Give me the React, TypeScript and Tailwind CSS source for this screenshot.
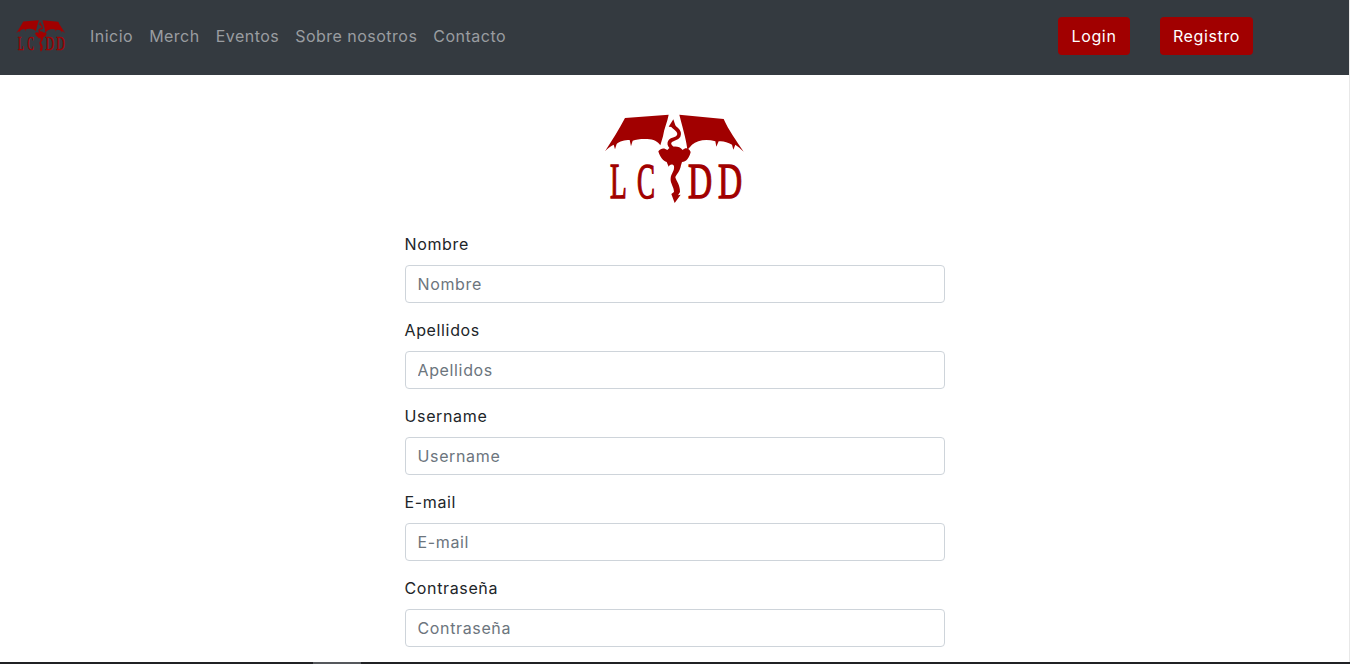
import React from 'react';

const font = 'font-["Inter","Liberation_Sans",sans-serif]';

const DragonLogo: React.FC<{ className?: string }> = ({ className }) => (
  <svg viewBox="45 28 420 270" className={`overflow-visible ${className ?? ''}`} aria-label="LCDD">
    <g fill="#a10000">
      {/* left wing */}
      <path d="M105 40 L236 30 C232 52 222 72 219 95 L211 122 C204 110 190 104 172 103 C156 102 138 104 128 108 L123 125 L119 106 C104 106 88 110 80 118 L75 134 L71 120 C62 124 53 131 45 140 C66 108 88 72 105 40 Z" />
      {/* right wing */}
      <path d="M268 30 L401 43 C415 75 440 110 461 141 C452 132 444 125 436 120 L430 135 L426 120 C412 112 398 108 386 110 L379 126 L376 110 C350 102 322 106 306 120 L292 136 C290 110 282 85 268 30 Z" />
      {/* neck and head */}
      <path d="M246 62 C258 72 272 80 266 94 C258 108 240 100 238 115 C236 128 252 130 256 140" fill="none" stroke="#a10000" strokeWidth="11" />
      <path d="M236 66 L250 44 L258 68 Z" />
      {/* body and tail */}
      <path d="M205 140 C214 128 224 130 232 136 C242 122 268 122 278 136 C286 128 296 128 302 142 C298 160 288 172 276 172 L273 182 C270 202 258 210 256 218 C260 232 270 240 270 262 L264 272 L272 270 L254 295 L244 268 L252 262 C252 246 240 236 242 220 C244 205 254 200 252 184 C248 178 240 178 236 186 L230 172 C220 170 210 158 205 140 Z" />
    </g>
    <g fill="#a10000" stroke="#a10000" strokeWidth="4" fontFamily='"Liberation Serif", serif' fontSize="150">
      <text transform="translate(60 279) scale(0.55 1)">L</text>
      <text transform="translate(141 279) scale(0.54 1)">C</text>
      <text transform="translate(294 279) scale(0.67 1)">D</text>
      <text transform="translate(384 279) scale(0.67 1)">D</text>
    </g>
  </svg>
);

const fields = ['Nombre', 'Apellidos', 'Username', 'E-mail', 'Contraseña'];
const links = ['Inicio', 'Merch', 'Eventos', 'Sobre nosotros', 'Contacto'];

export default function App() {
  return (
    <div className={`${font} flex h-[664px] flex-col overflow-hidden bg-white tracking-[0.04em]`}>
      <div className="flex min-h-0 flex-1 border-r border-[#e8e8e8]">
        <div className="min-w-0 flex-1">
          <nav className="flex h-[75px] items-center bg-[#343a40] pb-[3px] pl-[16px]">
            <DragonLogo className="h-[32px] w-[50px]" />
            <ul className="ml-[24px] flex gap-[16px] text-[16px] tracking-[0.03em]">
              {links.map((link) => (
                <li key={link}>
                  <a href="#" className="text-[#9a9da0]">{link}</a>
                </li>
              ))}
            </ul>
            <div className="ml-auto mr-[96px] flex gap-[30px] text-[16px] text-white">
              <button className="flex h-[38px] w-[72px] items-center justify-center rounded-[4px] bg-[#a10000]">Login</button>
              <button className="flex h-[38px] w-[93px] items-center justify-center rounded-[4px] bg-[#a10000]">Registro</button>
            </div>
          </nav>
          <main className="flex flex-col items-center pt-[39px]">
            <DragonLogo className="h-[90px] w-[140px]" />
            <form className="mt-[28px] flex w-[540px] flex-col gap-[15px]">
              {fields.map((field) => (
                <div key={field} className="flex flex-col gap-[9px]">
                  <label className="text-[16px] leading-[24px] text-[#212529]">{field}</label>
                  <input
                    placeholder={field}
                    className="h-[38px] w-full rounded-[4px] border border-[#ced4da] px-[12px] text-[16px] placeholder:text-[#6c757d]"
                  />
                </div>
              ))}
            </form>
          </main>
        </div>
      </div>
      <div className="flex h-[2px] shrink-0 bg-[#202124]">
        <div className="ml-[313px] w-[48px] bg-[#55585c]" />
      </div>
    </div>
  );
}
